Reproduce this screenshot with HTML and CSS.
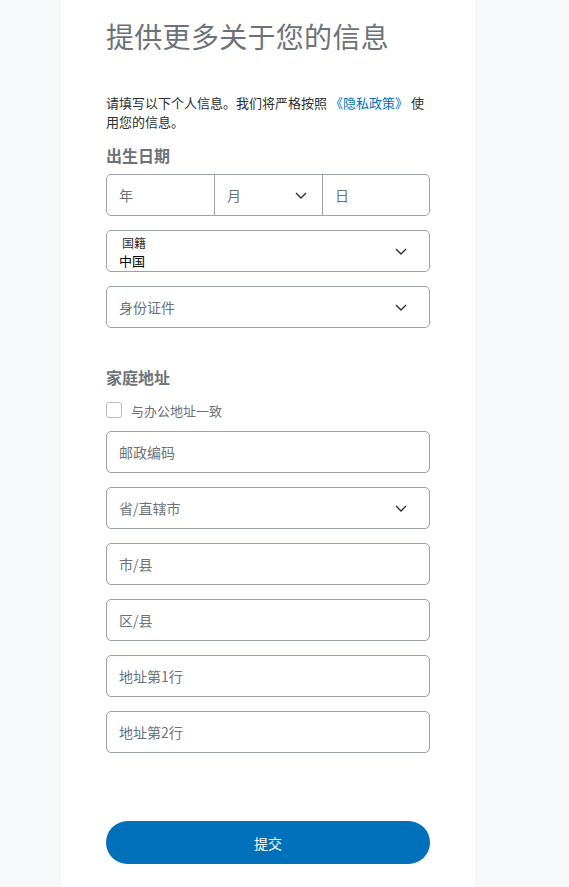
FILE: index.html
```html
<!DOCTYPE html>
<html lang="zh-CN">
<head>
<meta charset="utf-8">
<title>提供更多关于您的信息</title>
<link rel="stylesheet" href="styles.css">
</head>
<body>
<div class="page">
  <main class="card">
    <h1 class="title">提供更多关于您的信息</h1>
    <p class="intro"><span>请填写以下个人信息。我们将严格按照</span> <a class="link" href="#">《隐私政策》</a> <span>使用您的信息。</span></p>

    <h2 class="section section-first">出生日期</h2>
    <div class="date-group">
      <div class="date-part"><span class="ph">年</span></div>
      <div class="date-part date-month"><span class="ph">月</span>
        <svg class="chev chev-small" width="12" height="7" viewBox="0 0 12 7"><polyline points="1,1 6,6 11,1" fill="none" stroke="#2c2e2f" stroke-width="1.4"/></svg>
      </div>
      <div class="date-part"><span class="ph">日</span></div>
    </div>

    <div class="field select select-labeled">
      <div class="stack">
        <span class="float-label">国籍</span>
        <span class="value">中国</span>
      </div>
      <svg class="chev" width="12" height="7" viewBox="0 0 12 7"><polyline points="1,1 6,6 11,1" fill="none" stroke="#2c2e2f" stroke-width="1.4"/></svg>
    </div>

    <div class="field select">
      <span class="ph">身份证件</span>
      <svg class="chev" width="12" height="7" viewBox="0 0 12 7"><polyline points="1,1 6,6 11,1" fill="none" stroke="#2c2e2f" stroke-width="1.4"/></svg>
    </div>

    <h2 class="section section-addr">家庭地址</h2>
    <label class="check-row">
      <span class="checkbox"></span>
      <span class="check-label">与办公地址一致</span>
    </label>

    <div class="field"><span class="ph">邮政编码</span></div>
    <div class="field select">
      <span class="ph">省/直辖市</span>
      <svg class="chev" width="12" height="7" viewBox="0 0 12 7"><polyline points="1,1 6,6 11,1" fill="none" stroke="#2c2e2f" stroke-width="1.4"/></svg>
    </div>
    <div class="field"><span class="ph">市/县</span></div>
    <div class="field"><span class="ph">区/县</span></div>
    <div class="field"><span class="ph">地址第1行</span></div>
    <div class="field"><span class="ph">地址第2行</span></div>

    <button class="submit" type="button">提交</button>
  </main>
</div>
</body>
</html>
```

FILE: styles.css
```css
html, body {
  margin: 0;
  padding: 0;
  background: #f7f8fa;
  font-family: "Noto Sans CJK SC", "Noto Sans", "Liberation Sans", sans-serif;
  color: #2c2e2f;
}

.page {
  display: flex;
  min-height: 887px;
}

.card {
  margin-left: 61px;
  width: 414px;
  box-sizing: border-box;
  padding: 0 45px 30px;
  background: #ffffff;
  display: flex;
  flex-direction: column;
  min-height: 887px;
}

.title {
  margin: 18px 0 0;
  font-size: 28px;
  line-height: 36px;
  font-weight: 400;
  color: #6c7378;
  letter-spacing: 0.3px;
}

.intro {
  margin: 39px 0 0;
  font-size: 13px;
  line-height: 19px;
  color: #2c2e2f;
}

.link {
  color: #0070ba;
  text-decoration: none;
}

.section {
  margin: 0 0 8px;
  font-size: 16px;
  line-height: 22px;
  font-weight: 700;
  color: #6c7378;
}

.section-first { margin-top: 13px; }
.section-addr { margin-top: 38px; margin-bottom: 0; }

.date-group {
  display: grid;
  grid-template-columns: 107px 108px 1fr;
  height: 42px;
  box-sizing: border-box;
  border: 1px solid #9da3a6;
  border-radius: 5px;
}

.date-part {
  display: flex;
  align-items: center;
  padding-left: 12px;
  padding-right: 15px;
  box-sizing: border-box;
}

.date-part + .date-part {
  border-left: 1px solid #9da3a6;
}

.date-month {
  justify-content: space-between;
}

.ph {
  font-size: 14px;
  color: #6c7378;
}

.field {
  margin-top: 14px;
  height: 42px;
  box-sizing: border-box;
  border: 1px solid #9da3a6;
  border-radius: 5px;
  display: flex;
  align-items: center;
  padding: 0 22px 0 12px;
}

.select {
  justify-content: space-between;
}

.stack {
  display: flex;
  flex-direction: column;
  padding-top: 2px;
}

.float-label {
  font-size: 12px;
  line-height: 17px;
  color: #2c2e2f;
  padding-left: 3px;
}

.value {
  font-size: 13px;
  line-height: 19px;
  color: #000000;
}

.chev {
  display: block;
  flex: none;
}

.check-row {
  margin: 12px 0 11px;
  height: 20px;
  display: flex;
  align-items: center;
  gap: 9px;
}

.checkbox {
  width: 16px;
  height: 16px;
  box-sizing: border-box;
  border: 1px solid #b7bcbf;
  border-radius: 3px;
  background: #fff;
}

.check-label {
  font-size: 13px;
  color: #6c7378;
}

.check-row + .field { margin-top: 0; }

.submit {
  margin-top: 68px;
  height: 43px;
  border: none;
  border-radius: 22px;
  background: #0070ba;
  color: #ffffff;
  font-family: inherit;
  font-size: 14px;
  cursor: pointer;
}
```
